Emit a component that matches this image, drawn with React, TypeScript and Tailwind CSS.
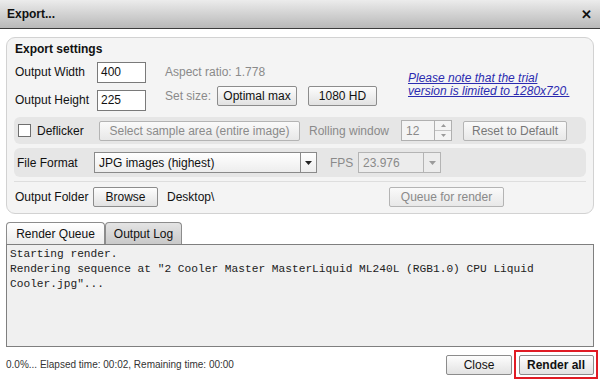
import { ChevronDown } from "lucide-react"

const btn =
   "h-[20px] flex items-center justify-center rounded-[2px] border border-[#8c8c8c] bg-gradient-to-b from-[#fdfdfd] to-[#e2e2e2] text-[12px] text-[#111]"
const btnOff =
   "h-[20px] flex items-center justify-center rounded-[2px] border border-[#b4b4b4] bg-gradient-to-b from-[#fafafa] to-[#e8e8e8] text-[12px] text-[#8a8a8a]"

const Caret = ({ dim }: { dim?: boolean }) => (
   <svg width="7" height="4" viewBox="0 0 7 4">
      <path d="M0 0h7L3.5 4z" fill={dim ? "#9a9a9a" : "#222"} />
   </svg>
)

const App = () => {
   return (
      <div className="w-[600px] h-[379px] bg-white flex flex-col font-['Liberation_Sans',Arial,sans-serif] text-[12px] text-[#111] overflow-hidden">
         {/* title bar */}
         <div className="h-[29px] shrink-0 flex items-center justify-between pl-[7px] pr-[8px] border-b border-[#3c3c3c] bg-gradient-to-b from-[#ececec] via-[#d2d2d2] to-[#b9b9b9]">
            <span className="font-bold text-[12px]">Export...</span>
            <span className="font-bold text-[13px] leading-none">✕</span>
         </div>

         <div className="px-[6px] pt-[8px] flex flex-col">
            {/* export settings panel */}
            <div className="h-[177px] rounded-[9px] border border-[#d2d2d2] bg-[#f4f4f4] px-[7px] pt-[2px]">
               <div className="h-[18px] pl-[1px] flex items-center font-bold">Export settings</div>

               <div className="flex h-[56px]">
                  <div className="flex flex-col pl-[1px]">
                     <div className="h-[28px] flex items-center">
                        <span className="w-[82px]">Output Width</span>
                        <div className="w-[49px] h-[21px] border border-[#7a7a7a] bg-white flex items-center pl-[3px]">400</div>
                     </div>
                     <div className="h-[28px] flex items-center">
                        <span className="w-[82px]">Output Height</span>
                        <div className="w-[49px] h-[21px] border border-[#7a7a7a] bg-white flex items-center pl-[3px]">225</div>
                     </div>
                  </div>
                  <div className="flex flex-col ml-[19px]">
                     <div className="h-[28px] flex items-center text-[#8a8a8a]">Aspect ratio: 1.778</div>
                     <div className="h-[20px] flex items-center">
                        <span className="text-[#8a8a8a] w-[52px]">Set size:</span>
                        <div className={`${btn} w-[80px]`}>Optimal max</div>
                        <div className={`${btn} w-[69px] ml-[11px]`}>1080 HD</div>
                     </div>
                  </div>
                  <div className="ml-[31px] pt-[14px] italic underline text-[#2b2bb0] leading-[13px]">
                     Please note that the trial
                     <br />
                     version is limited to 1280x720.
                  </div>
               </div>

               {/* deflicker band */}
               <div className="mt-[3px] h-[27px] rounded-[6px] bg-[#e6e6e6] flex items-center pl-[4px]">
                  <div className="w-[13px] h-[13px] border border-[#6f6f6f] bg-white" />
                  <span className="ml-[6px] w-[62px]">Deflicker</span>
                  <div className={`${btnOff} w-[201px]`}>Select sample area (entire image)</div>
                  <span className="ml-[9px] w-[92px] text-[#8a8a8a]">Rolling window</span>
                  <div className="w-[51px] h-[21px] border border-[#b0b0b0] bg-[#f4f4f4] flex">
                     <span className="flex-1 flex items-center pl-[4px] text-[#8a8a8a]">12</span>
                     <div className="w-[17px] border-l border-[#b0b0b0] flex flex-col">
                        <div className="flex-1 flex items-center justify-center border-b border-[#c4c4c4]">
                           <svg width="5" height="3" viewBox="0 0 5 3"><path d="M0 3h5L2.5 0z" fill="#9a9a9a" /></svg>
                        </div>
                        <div className="flex-1 flex items-center justify-center">
                           <svg width="5" height="3" viewBox="0 0 5 3"><path d="M0 0h5L2.5 3z" fill="#9a9a9a" /></svg>
                        </div>
                     </div>
                  </div>
                  <div className={`${btnOff} w-[104px] ml-[11px] text-[#777]`}>Reset to Default</div>
               </div>

               {/* file format band */}
               <div className="mt-[4px] h-[29px] rounded-[6px] bg-[#e6e6e6] flex items-center pl-[3px]">
                  <span className="w-[77px]">File Format</span>
                  <div className="w-[223px] h-[21px] border border-[#8a8a8a] bg-gradient-to-b from-white to-[#ededed] flex">
                     <span className="flex-1 flex items-center pl-[4px]">JPG images (highest)</span>
                     <div className="w-[16px] border-l border-[#8a8a8a] flex items-center justify-center">
                        <Caret />
                     </div>
                  </div>
                  <span className="ml-[13px] w-[28px] text-[#8a8a8a]">FPS</span>
                  <div className="w-[83px] h-[21px] border border-[#b4b4b4] bg-[#ececec] flex">
                     <span className="flex-1 flex items-center pl-[4px] text-[#8a8a8a]">23.976</span>
                     <div className="w-[17px] border-l border-[#b4b4b4] flex items-center justify-center">
                        <Caret dim />
                     </div>
                  </div>
               </div>

               <div className="mt-[4px] h-px bg-[#dedede]" />

               {/* output folder row */}
               <div className="h-[29px] flex items-center pl-[1px]">
                  <span className="w-[78px]">Output Folder</span>
                  <div className={`${btn} w-[65px]`}>Browse</div>
                  <span className="ml-[9px] w-[222px]">Desktop\</span>
                  <div className={`${btnOff} w-[115px] text-[#6e6e6e]`}>Queue for render</div>
               </div>
            </div>

            {/* tabs */}
            <div className="mt-[8px] h-[22px] flex items-end">
               <div className="w-[99px] h-[22px] rounded-t-[4px] border border-b-0 border-[#8c8c8c] bg-gradient-to-b from-white to-[#ececec] flex items-center justify-center">
                  Render Queue
               </div>
               <div className="w-[77px] h-[22px] rounded-t-[4px] border border-b-0 border-[#8c8c8c] bg-gradient-to-b from-[#e4e4e4] to-[#c9c9c9] flex items-center justify-center">
                  Output Log
               </div>
            </div>

            {/* log */}
            <div className="h-[103px] border border-[#7f7f7f] bg-[#f0f0f0] pl-[3px] pt-[2px] font-['Liberation_Mono','Courier_New',monospace] text-[11.2px] leading-[15px] text-[#222]">
               <div>Starting render.</div>
               <div>Rendering sequence at "2 Cooler Master MasterLiquid ML240L (RGB1.0) CPU Liquid</div>
               <div>Cooler.jpg"...</div>
            </div>

            {/* status + buttons */}
            <div className="mt-[3px] h-[29px] flex items-center">
               <span className="flex-1 text-[10px] text-[#333]">0.0%... Elapsed time: 00:02, Remaining time: 00:00</span>
               <div className={`${btn} w-[66px]`}>Close</div>
               <div className="ml-[2px] mr-[-4px] w-[84px] h-[29px] border-2 border-[#e01b24] flex items-center justify-center">
                  <div className={`${btn} w-[75px] font-bold`}>Render all</div>
               </div>
            </div>
         </div>
      </div>
   )
}

export default App
